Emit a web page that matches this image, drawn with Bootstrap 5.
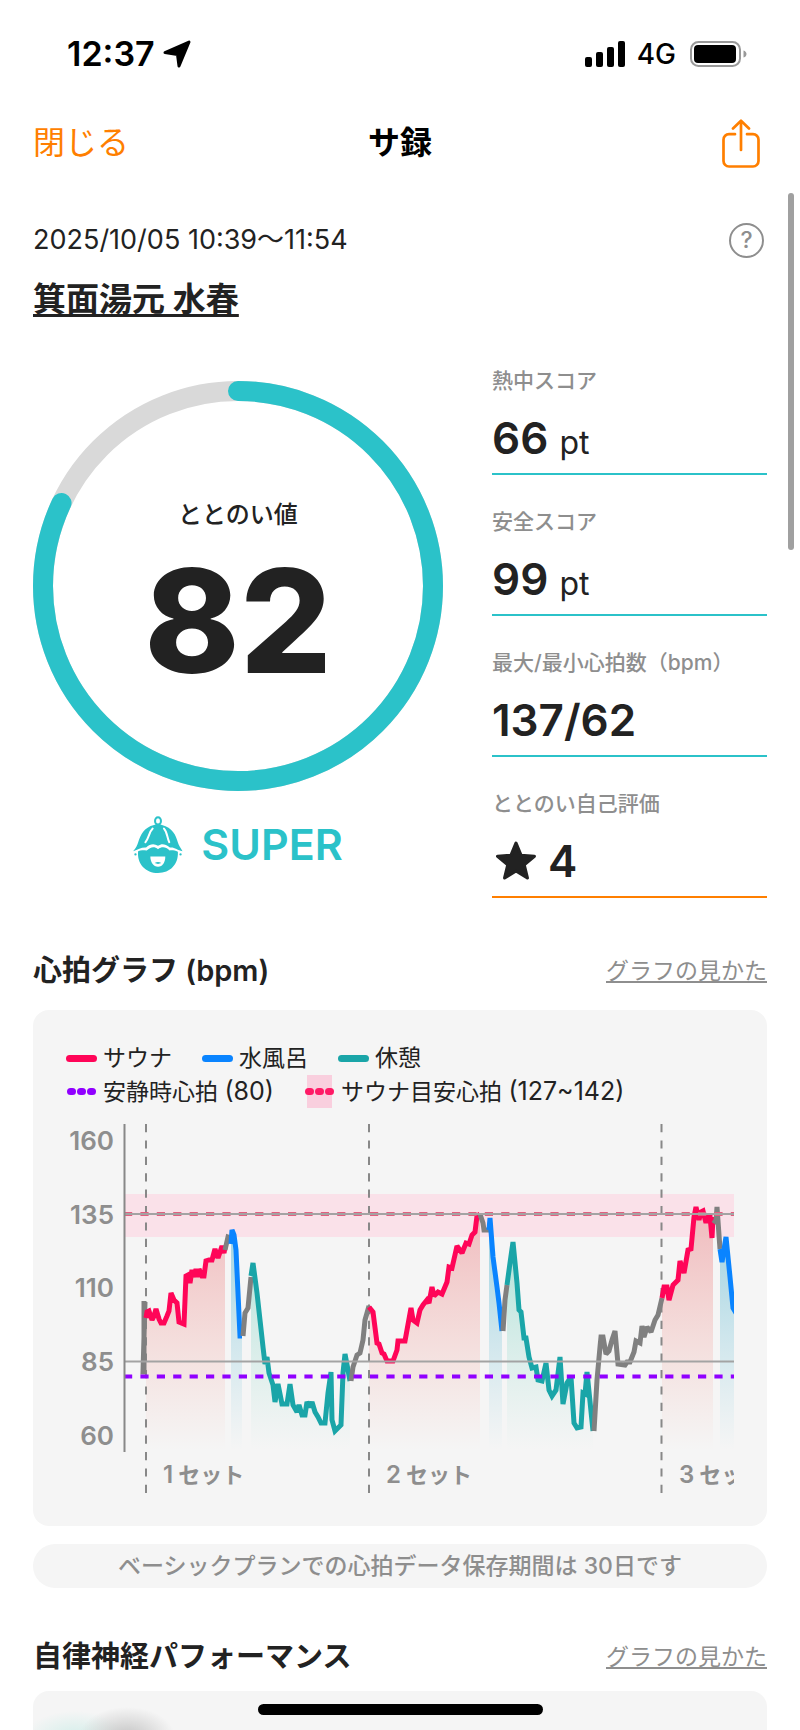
<!DOCTYPE html>
<html lang="ja">
<head>
<meta charset="utf-8">
<meta name="viewport" content="width=device-width, initial-scale=1">
<title>サ録</title>
<link href="https://cdn.jsdelivr.net/npm/bootstrap@5.3.0/dist/css/bootstrap.min.css" rel="stylesheet">
<style>
  :root { --teal: #2bc2c9; --orange: #ff7f00; --ink: #222; --muted-gray: #8e8e8e; --panel: #f5f5f5; }
  body { font-family: Inter, "Noto Sans CJK JP", sans-serif; color: var(--ink); background: #fff; }
  svg { display: block; flex: none; }
  .screen { min-height: 100vh; overflow: hidden; }
  .status-bar { height: 106px; padding: 2px 53px 0 67px; color: #000; }
  .clock { font-size: 34px; font-weight: 600; line-height: 42px; }
  .network { padding: 0 14px 0 12px; font-size: 28px; font-weight: 500; line-height: 42px; }
  .title-bar { height: 74px; }
  .title-bar > * { flex: 1 1 0; }
  .title-bar h1 { font-size: 32px; line-height: 40px; font-weight: 700; color: #000; }
  .btn-close-text { font-size: 32px; line-height: 40px; color: var(--orange); }
  .btn-share { margin-right: 7px; }
  .px-page { padding-left: 33px; padding-right: 33px; }
  .date-row { margin-top: 42px; font-size: 27px; line-height: 36px; }
  .help { width: 35px; height: 35px; margin-right: 3px; border: 2px solid var(--muted-gray); color: var(--muted-gray); font-size: 23px; line-height: 31px; font-weight: 500; }
  .facility { margin-top: 22px; font-size: 33px; line-height: 38px; font-weight: 700; }
  .facility a { color: inherit; text-decoration: underline 3px; text-underline-offset: 3px; text-decoration-skip-ink: none; }
  .summary { display: grid; grid-template-columns: 410fr 275fr; column-gap: 49px; margin-top: 16px; }
  .score-side { padding-top: 47px; }
  .ring svg { width: 100%; height: auto; }
  .ring-text { inset: 0; padding-top: 22px; gap: 15px; }
  .ring-label { font-size: 24px; line-height: 32px; font-weight: 500; }
  .ring-value { font-size: 144px; line-height: 150px; font-weight: 800; }
  .rank { margin-top: 25px; gap: 18px; color: var(--teal); font-size: 43px; line-height: 57px; font-weight: 600; }
  .stat { padding: 33px 0 11px; border-bottom: 2px solid var(--teal); }
  .stat.self { border-color: var(--orange); }
  .stat dt { font-size: 21px; line-height: 28px; font-weight: 500; color: var(--muted-gray); white-space: nowrap; }
  .stat dd { height: 48px; margin: 19px 0 0; font-size: 44px; line-height: 48px; font-weight: 600; }
  .unit { font-size: 32px; line-height: 32px; font-weight: 400; }
  .star { margin: 0 12px 0 4px; }
  .section-head h2 { font-size: 29px; line-height: 40px; font-weight: 600; }
  .guide { font-size: 23px; line-height: 40px; color: var(--muted-gray); text-decoration: underline 2px; text-underline-offset: 2px; text-decoration-skip-ink: none; }
  .panel { background: var(--panel); border-radius: 24px; }
  .hr-panel { padding: 32px 33px; border-radius: 16px; }
  .legend-row { height: 33px; column-gap: 30px; font-size: 23px; line-height: 33px; }
  .legend-row > span { display: flex; align-items: center; gap: 6px; white-space: nowrap; }
  .legend-row .range { font-size: 25px; }
  .plot { width: 100%; height: auto; margin-top: 12px; }
  .plot text { fill: var(--muted-gray); font-weight: 600; }
  .note { margin-top: 18px; font-size: 23px; line-height: 44px; font-weight: 500; color: var(--muted-gray); }
  .nerve { min-height: 39px; border-radius: 16px 16px 0 0;
    background: radial-gradient(ellipse 48px 30px at 94px 46px, #c4c4c4, transparent), radial-gradient(ellipse 50px 26px at 42px 46px, #d4eeea, transparent), var(--panel); }
  .scroll-thumb { position: absolute; top: 193px; right: 6px; width: 6px; height: 357px; border-radius: 3px; background: #a0a0a0; }
  .home-bar { position: fixed; bottom: 15px; left: 50%; width: 285px; height: 11px; margin-left: -142px; border-radius: 6px; background: #000; }
</style>
</head>
<body>
<div class="screen d-flex flex-column position-relative">

  <div class="status-bar d-flex align-items-center justify-content-between">
    <div class="d-flex align-items-center gap-2">
      <span class="clock">12:37</span>
      <svg width="28" height="28" viewBox="0 0 28 28"><path d="M26 2 16 26 14.500 14.500 2 12.500Z" stroke="#000" stroke-width="3" stroke-linejoin="round"/></svg>
    </div>
    <div class="d-flex align-items-center">
      <svg width="40" height="26" viewBox="0 0 40 26"><rect y="16" width="7" height="10" rx="2"/><rect x="11" y="11" width="7" height="15" rx="2"/><rect x="22" y="6" width="7" height="20" rx="2"/><rect x="33" width="7" height="26" rx="2"/></svg>
      <span class="network">4G</span>
      <svg width="57" height="26" viewBox="0 0 57 26"><rect x="1" y="1" width="49" height="24" rx="7.500" fill="none" stroke="#999" stroke-width="2"/><rect x="4" y="4" width="42" height="18" rx="4" /><path d="M53.500 9.500c4 1 4 6 0 7z" fill="#999"/></svg>
    </div>
  </div>

  <header class="title-bar px-page d-flex align-items-center">
    <div><button type="button" class="btn btn-close-text border-0 p-0">閉じる</button></div>
    <h1 class="m-0 text-center">サ録</h1>
    <div class="d-flex justify-content-end">
      <button type="button" class="btn btn-share border-0 p-0" aria-label="共有">
        <svg width="38" height="49" viewBox="0 0 38 49" fill="none" stroke="#ff7f00" stroke-width="2.700" stroke-linecap="round" stroke-linejoin="round"><path d="M13 15.200H7a5.500 5.500 0 0 0-5.500 5.500V42A5.500 5.500 0 0 0 7 47.500h24a5.500 5.500 0 0 0 5.500-5.500V20.700a5.500 5.500 0 0 0-5.500-5.500h-6M19 31V2M11 9.500 19 1.700l8 7.800"/></svg>
      </button>
    </div>
  </header>

  <main class="px-page d-flex flex-column flex-grow-1">
    <div class="date-row d-flex align-items-center justify-content-between">
      <span>2025/10/05 10:39～11:54</span>
      <button type="button" class="btn help rounded-circle p-0" aria-label="ヘルプ">?</button>
    </div>
    <div class="facility"><a href="#">箕面湯元 水春</a></div>

    <section class="summary">
      <div class="score-side">
        <div class="ring position-relative">
          <svg viewBox="0 0 410 410" fill="none" stroke-width="20">
            <circle cx="205" cy="205" r="195" stroke="#d9d9d9"/>
            <circle cx="205" cy="205" r="195" stroke="#2bc2c9" stroke-linecap="round" pathLength="100" stroke-dasharray="82 100" transform="rotate(-90 205 205)"/>
          </svg>
          <div class="ring-text position-absolute d-flex flex-column align-items-center justify-content-center">
            <span class="ring-label">ととのい値</span>
            <span class="ring-value">82</span>
          </div>
        </div>
        <div class="rank d-flex align-items-center justify-content-center">
          <svg width="50" height="57" viewBox="39 46 150 172" fill="#2bc2c9">
            <ellipse cx="114" cy="61" rx="9" ry="11" fill="none" stroke="#2bc2c9" stroke-width="6"/>
            <path d="M102 73q12-5 24 0c31 8 42 30 48 53 3 10 8 16 14 26-16-3-24-13-38-11-15-11-24-13-36-5-12-8-24-6-36 5-14-1-24 6-39 11 8-8 12-16 15-26 7-23 18-46 48-53z"/>
            <path d="M98 84C87 94 86 115 76 125M132 84c11 12 9 28 16 41" fill="none" stroke="#fff" stroke-width="6" stroke-linecap="round"/>
            <path d="M54 152c9-4 16-2 26-2 11-10 22-14 34-4 13-9 24-6 35 4 8-1 16 0 25 4 2 38-23 64-60 64s-64-28-60-66z"/>
            <path d="M91 168h45c0 18-8 31-22 31s-23-13-23-31z" fill="#fff"/>
            <path d="M104 188q10-7 20 0-10 5-20 0z"/>
            <circle cx="46" cy="162" r="3.500"/><circle cx="182" cy="162" r="3.500"/>
          </svg>
          <span>SUPER</span>
        </div>
      </div>

      <dl class="m-0">
        <div class="stat"><dt>熱中スコア</dt><dd>66 <span class="unit">pt</span></dd></div>
        <div class="stat"><dt>安全スコア</dt><dd>99 <span class="unit">pt</span></dd></div>
        <div class="stat"><dt>最大/最小心拍数（bpm）</dt><dd>137/62</dd></div>
        <div class="stat self"><dt>ととのい自己評価</dt>
          <dd class="d-flex align-items-center">
            <svg class="star" width="40" height="40" viewBox="1 1 38 38"><path d="m20 3 4.800 11.600L37.500 15.500 27.800 23.700l3 12.400L20 29.500 9.200 36.100l3-12.400L2.500 15.500l12.700-.9z" fill="#222" stroke="#222" stroke-width="3" stroke-linejoin="round"/></svg>4</dd></div>
      </dl>
    </section>

    <div class="section-head d-flex justify-content-between" style="margin-top:53px">
      <h2 class="m-0">心拍グラフ (bpm)</h2>
      <a class="guide" href="#">グラフの見かた</a>
    </div>

    <section class="panel hr-panel" style="margin-top:19px">
      <div class="legend-row d-flex">
        <span><svg width="31" height="7"><rect width="31" height="7" rx="3.500" fill="#ff0558"/></svg>サウナ</span>
        <span><svg width="31" height="7"><rect width="31" height="7" rx="3.500" fill="#0a84ff"/></svg>水風呂</span>
        <span><svg width="31" height="7"><rect width="31" height="7" rx="3.500" fill="#1aa5a8"/></svg>休憩</span>
      </div>
      <div class="legend-row d-flex">
        <span><svg width="31" height="7" fill="#9000ff"><rect x="1" width="9" height="7" rx="3.500"/><rect x="11" width="9" height="7" rx="3.500"/><rect x="21" width="9" height="7" rx="3.500"/></svg><span>安静時心拍 <span class="range">(80)</span></span></span>
        <span><svg width="31" height="33" fill="#ff1a66"><rect x="3" width="25" height="33" fill="#f9cfde"/><rect x="1" y="13" width="9" height="7" rx="3.500"/><rect x="11" y="13" width="9" height="7" rx="3.500"/><rect x="21" y="13" width="9" height="7" rx="3.500"/></svg><span>サウナ目安心拍 <span class="range">(127~142)</span></span></span>
      </div>

      <svg class="plot" viewBox="66 1120 668 374" role="img" aria-label="心拍グラフ">
        <defs>
          <linearGradient id="fill-sauna" gradientUnits="userSpaceOnUse" x1="0" y1="1214" x2="0" y2="1450"><stop stop-color="#f0bcbf"/><stop offset="1" stop-color="#f5c8c0" stop-opacity="0"/></linearGradient>
          <linearGradient id="fill-water" gradientUnits="userSpaceOnUse" x1="0" y1="1230" x2="0" y2="1450"><stop stop-color="#a0d3e2"/><stop offset="1" stop-color="#b4dce6" stop-opacity="0"/></linearGradient>
          <linearGradient id="fill-rest" gradientUnits="userSpaceOnUse" x1="0" y1="1250" x2="0" y2="1450"><stop stop-color="#b2e3da"/><stop offset="1" stop-color="#c8e8e2" stop-opacity="0"/></linearGradient>
        </defs>
        <rect x="124" y="1194" width="610" height="43" fill="#fae1e9"/>
        <g id="areas"></g>
        <g stroke="#888" stroke-width="2" stroke-dasharray="8.200 8.200"><path d="M146 1124V1494M369 1124V1494M661.500 1124V1494"/></g>
        <g id="lines" fill="none" stroke-width="5" stroke-linejoin="miter" stroke-miterlimit="2"></g>
        <path d="M124 1214H734" stroke="#e0607f" stroke-width="4" stroke-dasharray="8.200 8.200"/>
        <path d="M124 1214H734M124 1361.500H734" stroke="#a3a3a3" stroke-width="2"/>
        <path d="M124 1376.500H734" stroke="#9000ff" stroke-width="4" stroke-dasharray="8.200 8.200"/>
        <path d="M124.500 1124V1452" stroke="#888" stroke-width="2"/>
        <g font-size="26" text-anchor="end">
          <text x="114" y="1150">160</text><text x="114" y="1224">135</text><text x="114" y="1297">110</text><text x="114" y="1371">85</text><text x="114" y="1445">60</text>
        </g>
        <g font-size="24"><text x="163" y="1483">1<tspan dx="5" font-size="22">セット</tspan></text><text x="386" y="1483">2<tspan dx="5" font-size="22">セット</tspan></text><text x="679" y="1483">3<tspan dx="5" font-size="22">セット</tspan></text></g>
      </svg>
    </section>

    <div class="note panel text-center">ベーシックプランでの心拍データ保存期間は 30日です</div>

    <div class="section-head d-flex justify-content-between" style="margin-top:49px">
      <h2 class="m-0">自律神経パフォーマンス</h2>
      <a class="guide" href="#">グラフの見かた</a>
    </div>
    <section class="nerve flex-grow-1" style="margin-top:14px"></section>
  </main>

  <div class="scroll-thumb"></div>
  <div class="home-bar"></div>
</div>

<script src="https://cdn.jsdelivr.net/npm/bootstrap@5.3.0/dist/js/bootstrap.bundle.min.js"></script>
<script>
  // Heart-rate trace, split by phase; points are in the chart's own units.
  const colors = { sauna: '#ff0558', water: '#0a84ff', rest: '#1aa5a8', move: '#808080' };
  const trace = [
    ['move', '144,1301 144,1372 143,1372 145,1302'],
    ['sauna', '146,1318 147,1312 149,1311 152,1320 154,1316 156,1309 159,1319 161,1323 164,1323 167,1316 169,1311 171,1293 174,1300 177,1303 179,1322 184,1324 186,1276 188,1275 190,1283 192,1270 194,1277 196,1269 198,1277 199,1269 202,1276 204,1276 206,1261 209,1260 212,1260 215,1249 218,1258 222,1246 224,1253 225,1247'],
    ['move', '225,1250 228,1237 231,1238'],
    ['water', '231,1244 232,1230 234,1235 236,1250 240,1336 242,1336'],
    ['move', '243,1336 245,1313 248,1308 251,1277'],
    ['rest', '251,1276 253,1263 257,1293 260,1320 263,1347 265,1364 267,1357 269,1373 273,1385 275,1402 278,1384 282,1404 287,1404 290,1384 293,1405 297,1412 299,1405 302,1415 305,1415 307,1402 310,1407 312,1402 315,1412 318,1417 321,1423 325,1423 328,1393 331,1372 332,1420 335,1431 341,1425 343,1373 345,1354 348,1370 350,1381'],
    ['move', '351,1381 353,1367 357,1355 360,1353 363,1340 365,1320 369,1306 368,1314'],
    ['sauna', '369,1307 373,1312 377,1343 379,1344 382,1353 384,1354 387,1361 393,1361 397,1350 398,1341 405,1341 411,1308 413,1320 417,1323 420,1310 423,1305 427,1300 429,1303 432,1287 434,1296 438,1292 442,1294 447,1282 449,1267 452,1268 457,1246 462,1253 466,1243 469,1244 472,1235 475,1232 477,1216 480,1214'],
    ['move', '480,1214 483,1223 484,1230 489,1230'],
    ['water', '489,1230 490,1218 493,1257 497,1287 499,1303 502,1331'],
    ['move', '503,1331 505,1300 507,1285'],
    ['rest', '507,1285 510,1263 513,1242 517,1283 519,1310 521,1312 524,1338 526,1338 529,1357 532,1368 536,1367 538,1380 542,1381 546,1363 549,1390 552,1396 556,1390 560,1357 563,1404 567,1383 571,1377 574,1423 577,1428 581,1427 583,1393 585,1394 587,1372 593,1431'],
    ['move', '594,1431 597,1380 600,1347 601,1337 603,1337 606,1354 609,1351 612,1340 615,1331 618,1364 625,1365 627,1362 630,1362 634,1352 636,1341 640,1343 642,1326 644,1337 647,1327 651,1332 655,1320 658,1315 662,1298'],
    ['sauna', '662,1298 664,1287 667,1287 669,1300 673,1285 678,1280 680,1261 684,1273 688,1250 691,1249 694,1217 696,1207 699,1220 701,1212 703,1211 706,1223 707,1216 710,1216 712,1238 713,1217'],
    ['move', '713,1220 716,1222 717,1207 720,1249'],
    ['water', '720,1249 722,1262 726,1237 730,1277 733,1308 736,1313']
  ];
  const NS = 'http://www.w3.org/2000/svg';
  const draw = (parent, tag, attrs) => {
    const el = document.createElementNS(NS, tag);
    Object.entries(attrs).forEach(([k, v]) => el.setAttribute(k, v));
    document.getElementById(parent).append(el);
  };
  trace.forEach(([phase, points]) => {
    const xs = points.split(' ').map(p => p.split(',')[0]);
    if (phase !== 'move') draw('areas', 'polygon', { points: `${xs[0]},1450 ${points} ${xs[xs.length - 1]},1450`, fill: `url(#fill-${phase})` });
    draw('lines', 'polyline', { points, stroke: colors[phase] });
  });
</script>
</body>
</html>
